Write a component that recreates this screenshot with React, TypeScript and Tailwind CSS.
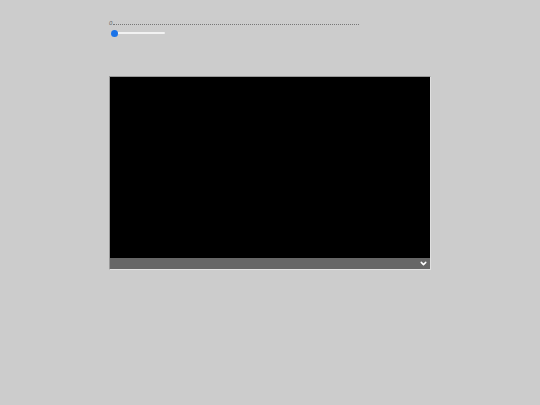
import { ChevronDown } from 'lucide-react';

const App = () => {
    return (
        <div className="min-h-[405px] w-[540px] bg-[#cccccc] font-['Liberation_Sans',sans-serif]">
            <div className="ml-[109px] flex flex-col pt-[19px]">
                {/* Progress text */}
                <div className="flex h-[7px] w-[250px] items-end">
                    <span className="text-[6px] leading-[6px] italic text-[#666]">0</span>
                    <div className="mb-[1px] ml-[1px] flex-1 border-b border-dotted border-[#777]" />
                </div>

                {/* Slider */}
                <div className="relative mt-[3px] flex h-[8px] w-[56px] items-center">
                    <div className="ml-[2px] h-[2px] flex-1 rounded-full bg-[#f2f2f2]" />
                    <div className="absolute left-[2px] h-[7px] w-[7px] rounded-full bg-[#1a73e8]" />
                </div>

                {/* Video */}
                <div className="mt-[39px] flex w-[322px] flex-col border border-t-[#999] border-l-[#999] border-r-[#e0e0e0] border-b-[#e0e0e0]">
                    <div className="h-[181px] bg-black" />
                    <div className="flex h-[11px] items-center justify-end bg-[#666666] pr-[2px]">
                        <ChevronDown className="h-[9px] w-[9px] text-white" strokeWidth={4} />
                    </div>
                </div>
            </div>
        </div>
    );
};

export default App;
